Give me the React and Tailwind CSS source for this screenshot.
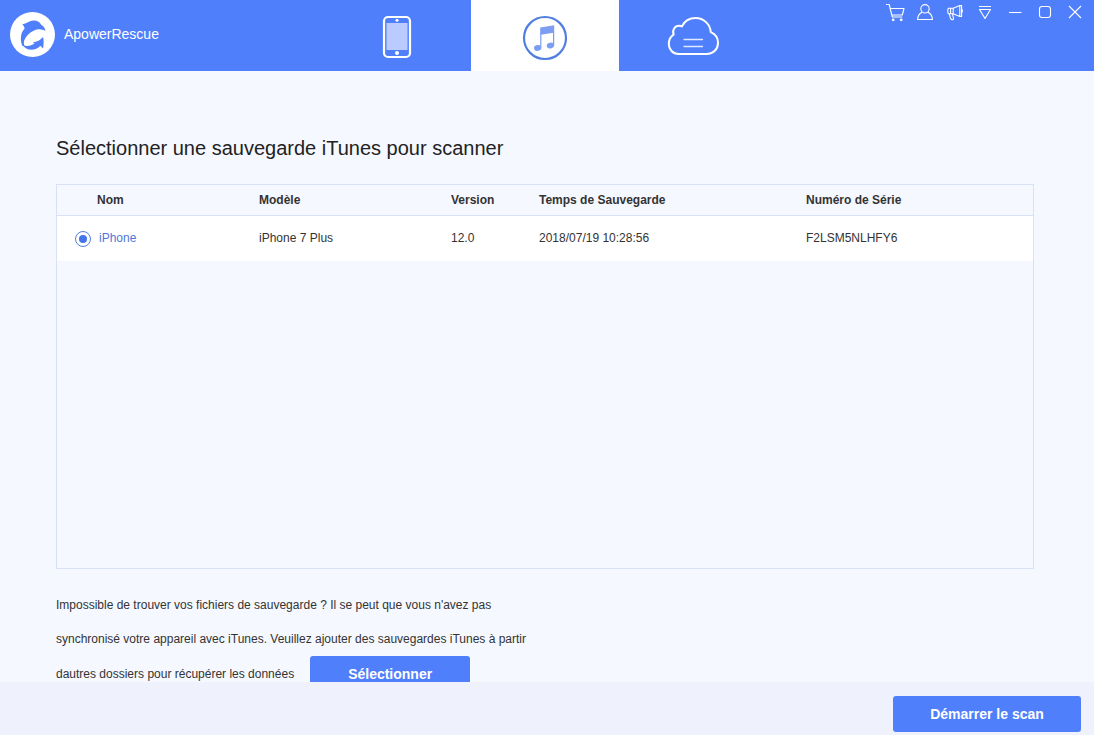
import { useState } from "react";

const windowButton = "flex h-6 w-[30px] items-center justify-center";

function Logo() {
  return (
    <svg viewBox="0 0 46 46" className="size-[46px]" aria-hidden="true">
      <circle cx="22.5" cy="22.5" r="22.5" fill="#fff" />
      <path
        fill="#507ffc"
        d="M12.4 34C10.2 29 10 21.5 14.6 16.6C14.4 15 13.6 13.6 12.2 12.2C16 12.4 18.5 8.8 23.5 8.6C27.5 8.5 30 10.4 31.2 12.8C33.6 14.2 35 16.2 35.4 19C32.6 17 28 16.4 24 18.4C18.8 21 15.6 24.5 14.2 28.5C13.8 30.4 13.8 32.4 14.4 34Z"
      />
      <path
        fill="#507ffc"
        d="M12 32.4C15.5 34.6 20.5 34.4 24.6 31.6L22.8 30.4C27 29.8 30.5 28.2 33 25C33.9 28.4 33.9 32 33 36.6L30.4 33.8C25.5 39 16.5 39.4 12 32.4Z"
      />
    </svg>
  );
}

function PhoneIcon() {
  return (
    <svg viewBox="0 0 30 44" className="h-11 w-[30px]" fill="none" aria-hidden="true">
      <rect x="2" y="2" width="26" height="40" rx="4" stroke="#fff" strokeWidth="2.2" />
      <rect x="4.5" y="8" width="21" height="27" fill="#bccbff" />
      <circle cx="15" cy="5.2" r="1.5" fill="#fff" />
      <circle cx="15" cy="38" r="2" fill="#fff" />
    </svg>
  );
}

function MusicIcon() {
  return (
    <svg viewBox="0 0 46 46" className="size-[46px]" fill="none" aria-hidden="true">
      <circle cx="23" cy="23" r="21" stroke="#507fdf" strokeWidth="2.2" />
      <path d="M18.8 13L31.6 11V17.8L18.8 19.8Z" fill="#7d9df3" />
      <path d="M18.8 32.5V13L31.6 11V30.5" stroke="#7d9df3" strokeWidth="1.2" />
      <ellipse cx="15.7" cy="32.9" rx="3.7" ry="2.9" fill="#7d9df3" transform="rotate(-12 15.7 32.9)" />
      <ellipse cx="28.4" cy="30.6" rx="3.7" ry="2.9" fill="#7d9df3" transform="rotate(-12 28.4 30.6)" />
    </svg>
  );
}

function CloudIcon() {
  return (
    <svg viewBox="0 0 54 40" className="h-10 w-[54px]" fill="none" stroke="#fff" strokeLinecap="round" aria-hidden="true">
      <path
        strokeWidth="2"
        strokeLinejoin="round"
        d="M12.5 38C6.8 38 2.8 33.4 2.8 28C2.8 24 4.6 20.5 7.6 18.6C5.9 14 9 9.8 13 9.8C14 9.8 15 10 15.8 10.5C18.4 5.2 23.7 2 29.6 2C37.7 2 44.3 8.3 44.8 16.2C49 18 52 22.2 52 27C52 33.2 47.2 38 41 38Z"
      />
      <path strokeWidth="1.4" stroke="#dfe9ff" d="M18 23.5H36.5M18 30.5H36.5" />
    </svg>
  );
}

function ControlIcon({ children }) {
  return (
    <svg viewBox="0 0 20 20" className="size-5" fill="none" stroke="#fff" strokeWidth="1.1" strokeLinejoin="round" aria-hidden="true">
      {children}
    </svg>
  );
}

const controls = [
  {
    label: "Acheter",
    icon: (
      <>
        <path d="M1 2.5H4.2L7.3 15H17.2M5 6.5H19L17.3 13H6.7" />
        <circle cx="8.2" cy="17.8" r="1.4" fill="#fff" stroke="none" />
        <circle cx="16.2" cy="17.8" r="1.4" fill="#fff" stroke="none" />
      </>
    ),
  },
  {
    label: "Compte",
    icon: (
      <>
        <circle cx="10" cy="6.8" r="4.2" />
        <path d="M7 10.3C4.2 11.7 2.7 14.2 2.6 17.5H17.4C17.3 14.2 15.8 11.7 13 10.3" />
      </>
    ),
  },
  {
    label: "Commentaires",
    icon: (
      <path d="M3.2 6.2H8.2V11.8H3.2Q2.3 9 3.2 6.2ZM8.2 6.2L14.8 3.5V14.5L8.2 11.8M14.8 3.5H16.6V14.5H14.8M16.6 7.2Q18.2 9 16.6 10.8M4.4 11.8L5.4 16Q6 18 7.8 17.8Q9 17.2 8.4 15.6L7.4 11.8M5.6 6.2V11.8" />
    ),
  },
  { label: "Menu", icon: <path d="M4 4.5H16M4.5 7.5H15.5L10 16.5Z" /> },
  { label: "Réduire", icon: <path d="M4 10.5H16.5" /> },
  { label: "Agrandir", icon: <rect x="4.5" y="4.5" width="11" height="11" rx="2.5" /> },
  { label: "Fermer", icon: <path d="M4 4L16 16M16 4L4 16" /> },
];

const tabs = [
  { id: "phone", label: "Appareil iOS", Icon: PhoneIcon },
  { id: "itunes", label: "Sauvegarde iTunes", Icon: MusicIcon },
  { id: "icloud", label: "Sauvegarde iCloud", Icon: CloudIcon },
];

const backups = [
  { name: "iPhone", model: "iPhone 7 Plus", version: "12.0", time: "2018/07/19 10:28:56", serial: "F2LSM5NLHFY6" },
];

export default function App() {
  const [tab, setTab] = useState("itunes");
  const [selected, setSelected] = useState(backups[0].serial);

  return (
    <div className="flex h-screen flex-col bg-[#f5f8ff] font-['Liberation_Sans',Arial,sans-serif] text-xs text-[#333]">
      <header className="flex h-[71px] shrink-0 bg-[#507ffc]">
        <div className="flex w-[323px] items-center gap-2 pb-0.5 pl-[10px] text-sm text-white">
          <Logo />
          <span className="pb-0.5">ApowerRescue</span>
        </div>
        <nav className="flex">
          {tabs.map(({ id, label, Icon }) => (
            <button
              key={id}
              type="button"
              aria-label={label}
              aria-pressed={tab === id}
              onClick={() => setTab(id)}
              className={`flex w-[148px] items-center justify-center ${id === "itunes" ? "pt-1" : id === "phone" ? "pt-0.5" : ""} ${tab === id ? "bg-white" : ""}`}
            >
              <Icon />
            </button>
          ))}
        </nav>
        <div className="ml-auto flex items-start pr-1">
          {controls.map((c) => (
            <button key={c.label} type="button" aria-label={c.label} className={windowButton}>
              <ControlIcon>{c.icon}</ControlIcon>
            </button>
          ))}
        </div>
      </header>

      <main className="min-h-0 flex-1 overflow-hidden pt-[63px] pr-[60px] pl-14">
        <h1 className="text-xl leading-7 text-[#222]">Sélectionner une sauvegarde iTunes pour scanner</h1>

        <div className="mt-[22px] min-h-[385px] border border-[#d8e1f5]">
          <table className="w-full table-fixed border-separate border-spacing-0 text-left">
            <colgroup>
              <col className="w-[202px]" />
              <col className="w-[192px]" />
              <col className="w-[88px]" />
              <col className="w-[267px]" />
              <col />
            </colgroup>
            <thead>
              <tr className="h-[31px] *:border-b *:border-[#d8e1f5]">
                <th className="pl-10">Nom</th>
                <th>Modèle</th>
                <th>Version</th>
                <th>Temps de Sauvegarde</th>
                <th>Numéro de Série</th>
              </tr>
            </thead>
            <tbody>
              {backups.map((b) => (
                <tr key={b.serial} className="h-[45px] bg-white">
                  <td className="pl-[18px]">
                    <label className="flex items-center gap-2 text-[#4f78d6]">
                      <input
                        type="radio"
                        name="backup"
                        checked={selected === b.serial}
                        onChange={() => setSelected(b.serial)}
                        className="size-4 appearance-none rounded-full border border-[#507fdf] bg-white bg-clip-content p-[3px] checked:bg-[#4474e8]"
                      />
                      <span className="pb-0.5">{b.name}</span>
                    </label>
                  </td>
                  <td className="pb-0.5">{b.model}</td>
                  <td className="pb-0.5">{b.version}</td>
                  <td className="pb-0.5">{b.time}</td>
                  <td className="pb-0.5">{b.serial}</td>
                </tr>
              ))}
            </tbody>
          </table>
        </div>

        <div className="mt-[19px] max-w-[500px] leading-[34px]">
          <p>
            Impossible de trouver vos fichiers de sauvegarde ? Il se peut que vous n'avez pas synchronisé votre appareil
            avec iTunes. Veuillez ajouter des sauvegardes iTunes à partir
          </p>
          <div className="flex items-center gap-4">
            <p>dautres dossiers pour récupérer les données</p>
            <button type="button" className="h-9 w-40 rounded-[3px] bg-[#507ffc] text-sm font-bold text-white">
              Sélectionner
            </button>
          </div>
        </div>
      </main>

      <footer className="flex h-[53px] shrink-0 items-end justify-end bg-[#eff2fd] pr-[13px] pb-[3px]">
        <button type="button" className="h-9 w-[188px] rounded-[3px] bg-[#507ffc] text-sm font-bold text-white">
          Démarrer le scan
        </button>
      </footer>
    </div>
  );
}
